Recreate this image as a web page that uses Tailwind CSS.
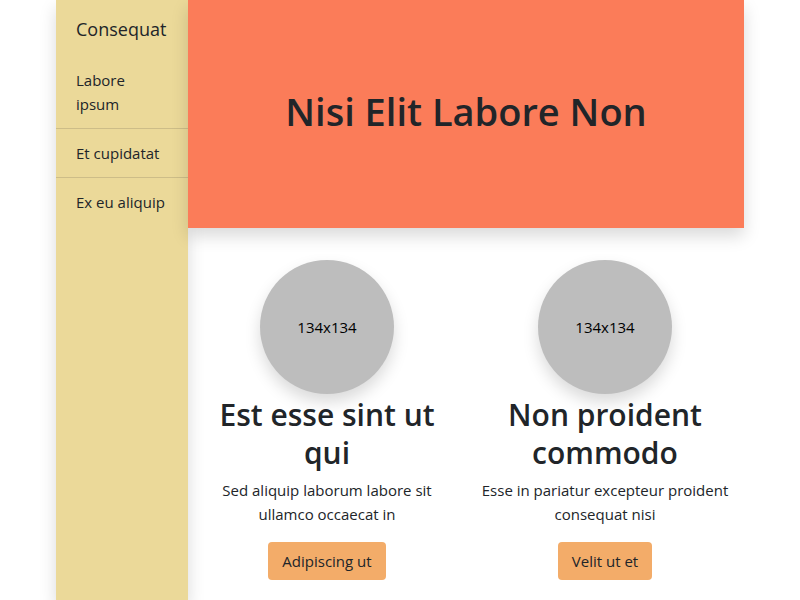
<!DOCTYPE html>
<html lang="en">
<head>
<meta charset="utf-8">
<meta name="viewport" content="width=device-width, initial-scale=1">
<title>Nisi Elit Labore Non</title>
<script src="https://cdn.jsdelivr.net/npm/@tailwindcss/browser@4"></script>
</head>
<body class="bg-white text-[15px] leading-6 text-[#212529] font-['Open_Sans','Noto_Sans',sans-serif]">
<div class="mx-auto flex min-h-screen w-[86%] max-w-7xl">
  <aside class="w-[132px] shrink-0 bg-[#ebd999] shadow-[0_8px_16px_rgba(0,0,0,0.15)]">
    <div class="px-5 pt-4 pb-3.5 text-lg leading-[26px]">Consequat</div>
    <nav class="divide-y divide-[#cdbd88]">
      <a href="#" class="block px-5 py-3">Labore ipsum</a>
      <a href="#" class="block px-5 py-3">Et cupidatat</a>
      <a href="#" class="block px-5 py-3">Ex eu aliquip</a>
    </nav>
  </aside>
  <main class="min-w-0 flex-1">
    <header class="bg-[#fb7c59] px-4 pt-22 pb-[94px] text-center shadow-[0_8px_16px_rgba(0,0,0,0.15)]">
      <h1 class="text-[38px] leading-[46px] font-semibold">Nisi Elit Labore Non</h1>
    </header>
    <div class="grid grid-cols-2 pt-8 text-center">
      <section class="px-3">
        <div class="mx-auto flex size-[134px] items-center justify-center rounded-full bg-[#bdbdbd] text-black shadow-[0_8px_16px_rgba(0,0,0,0.15)]">134x134</div>
        <h2 class="pt-0.5 mb-1.5 text-3xl leading-[38px] font-semibold">Est esse sint ut qui</h2>
        <p class="mb-4">Sed aliquip laborum labore sit ullamco occaecat in</p>
        <button type="button" class="rounded bg-[#f3ac69] px-3.5 py-[7px]">Adipiscing ut</button>
      </section>
      <section class="px-3">
        <div class="mx-auto flex size-[134px] items-center justify-center rounded-full bg-[#bdbdbd] text-black shadow-[0_8px_16px_rgba(0,0,0,0.15)]">134x134</div>
        <h2 class="pt-0.5 mb-1.5 text-3xl leading-[38px] font-semibold">Non proident commodo</h2>
        <p class="mb-4">Esse in pariatur excepteur proident consequat nisi</p>
        <button type="button" class="rounded bg-[#f3ac69] px-3.5 py-[7px]">Velit ut et</button>
      </section>
    </div>
  </main>
</div>
</body>
</html>
